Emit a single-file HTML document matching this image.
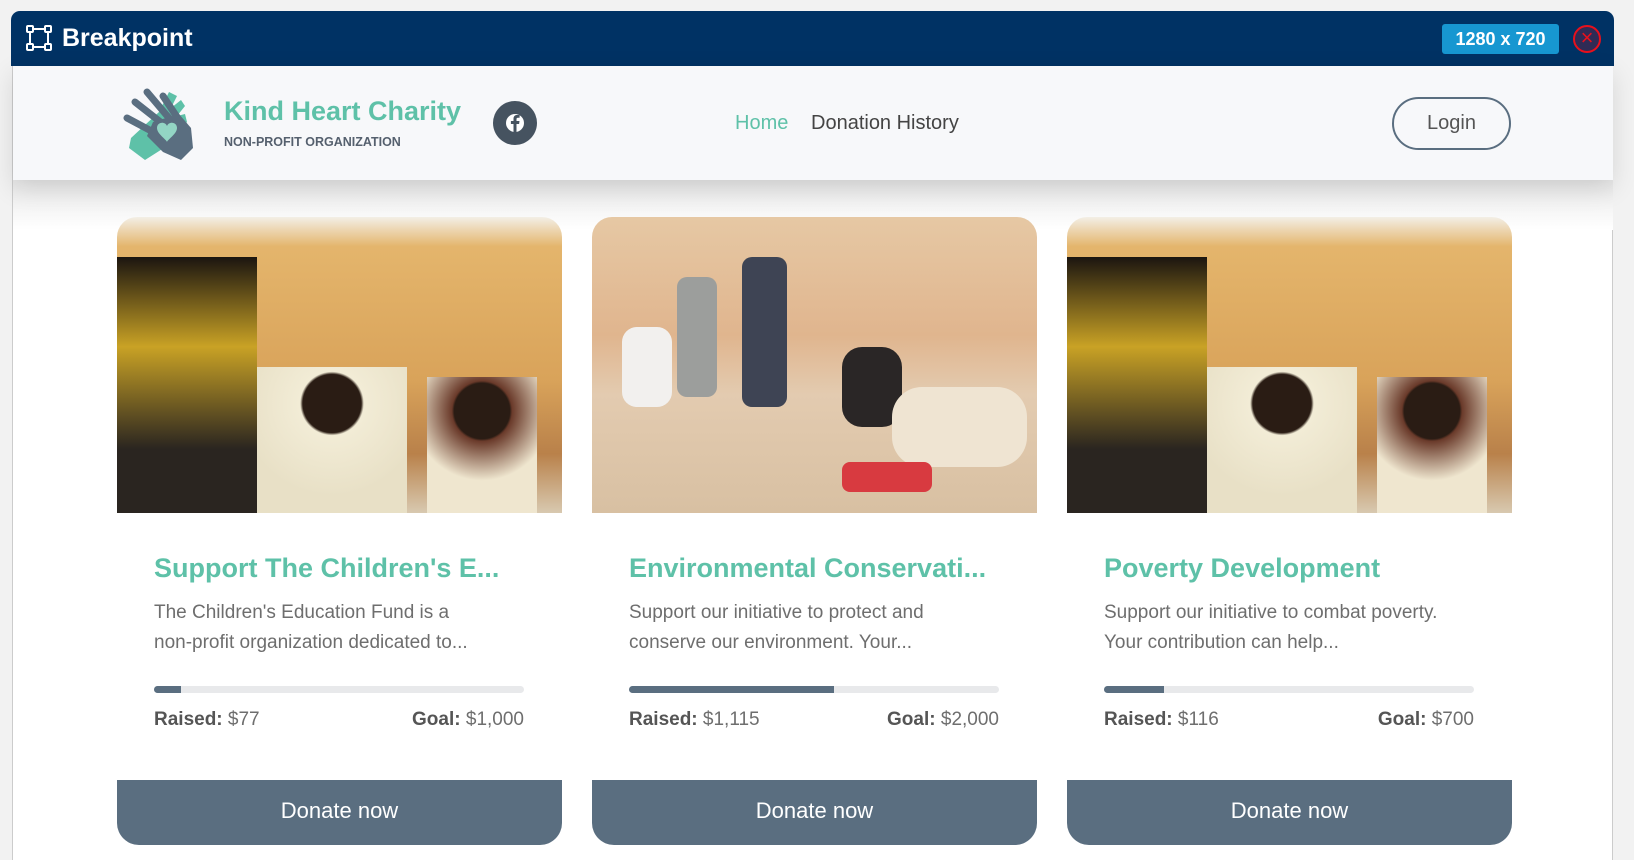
<!DOCTYPE html>
<html><head><meta charset="utf-8"><style>
*{box-sizing:border-box;margin:0;padding:0}
body{width:1634px;height:860px;background:#f2f2f2;font-family:"Liberation Sans",sans-serif;overflow:hidden;position:relative}
.bar{position:absolute;left:11px;top:11px;width:1603px;height:55px;background:#003264;border-radius:9px 9px 0 0}
.bar .t{position:absolute;left:51px;top:13px;color:#fff;font-weight:bold;font-size:25px}
.badge{position:absolute;left:1431px;top:13px;width:117px;height:30px;background:#1797d1;border-radius:3px;color:#fff;font-weight:bold;font-size:18px;text-align:center;line-height:30px}
.close{position:absolute;left:1562px;top:14px;width:28px;height:28px;border:2.5px solid #e8101c;border-radius:50%;background:#2f2b55;color:#e8101c;text-align:center;line-height:22px;font-size:22px}
.page{position:absolute;left:12px;top:66px;width:1601px;height:794px;background:#fff;border-left:1px solid #ccc;border-right:1px solid #ccc}
.hdr{position:absolute;left:0;top:0;width:1600px;height:114px;background:#f7f8fa;box-shadow:0 8px 24px rgba(0,0,0,.12)}
.fade{position:absolute;left:0;top:114px;width:1600px;height:50px;background:linear-gradient(#e8e8e8,#fff)}
.brand{position:absolute;left:211px;top:30px;color:#5ec1a8;font-size:27px;font-weight:bold}
.sub{position:absolute;left:211px;top:69px;color:#55606e;font-size:12.5px;font-weight:bold}
.fb{position:absolute;left:480px;top:35px;width:44px;height:44px;border-radius:50%;background:#465360}
.nav{position:absolute;top:46px;font-size:20px;color:#444}
.login{position:absolute;left:1379px;top:31px;width:119px;height:53px;border:2px solid #5a6e80;border-radius:27px;text-align:center;line-height:49px;font-size:20px;color:#555}
.card{position:absolute;top:151px;width:445px}
.img{height:296px;border-radius:20px 20px 0 0;overflow:hidden;position:relative}
.title{position:absolute;left:37px;top:336px;font-size:27px;font-weight:bold;color:#5ec1a8;white-space:nowrap}
.desc{position:absolute;left:37px;top:381px;font-size:19px;line-height:30px;color:#6e6e6e;width:345px}
.prog{position:absolute;left:37px;top:469px;width:370px;height:7px;background:#e8e9eb;border-radius:4px}
.prog i{display:block;height:7px;background:#5a6e80;border-radius:4px 0 0 4px}
.row{position:absolute;left:37px;top:492px;width:370px;font-size:19px;color:#6e6e6e}
.row b{color:#555}
.row span{float:right}
.btn{position:absolute;left:0;top:563px;width:445px;height:65px;background:#5a6e80;border-radius:0 0 22px 22px;color:#fff;text-align:center;line-height:62px;font-size:22px}
</style></head><body>
<div class="bar">
<svg style="position:absolute;left:14px;top:13px" width="28" height="28" viewBox="0 0 28 28" fill="none" stroke="#fff" stroke-width="2"><rect x="2" y="2" width="6" height="6" rx="1"/><rect x="20" y="2" width="6" height="6" rx="1"/><rect x="2" y="20" width="6" height="6" rx="1"/><rect x="20" y="20" width="6" height="6" rx="1"/><path d="M8 5h12M8 23h12M5 8v12M23 8v12"/></svg>
<div class="t">Breakpoint</div>
<div class="badge">1280 x 720</div>
<div class="close">×</div>
</div>
<div class="page">
<div class="fade"></div>
<div class="hdr">
<svg style="position:absolute;left:110px;top:20px" width="76" height="76" viewBox="0 0 76 76">
<g fill="#5ec1a8"><path d="M8 52 L36 26 L46 6 L54 10 L48 22 L58 14 L62 20 L54 30 L62 28 L64 36 L44 60 L22 74 L6 62 Z"/></g>
<g stroke="#5a6e80" stroke-width="7" stroke-linecap="round"><path d="M24 6 L46 32M12 16 L40 38M4 32 L34 48M40 10 L56 34"/></g>
<path fill="#5a6e80" d="M30 36 L56 28 L68 42 L70 62 L58 74 L40 66 L24 50 Z"/>
<path fill="#93d5c4" d="M34 42c0-6 8-7 10-2 2-5 10-4 10 2 0 6-10 12-10 14 0-2-10-8-10-14z"/>
</svg>
<div class="brand">Kind Heart Charity</div>
<div class="sub">NON-PROFIT ORGANIZATION</div>
<div class="fb"><svg width="44" height="44" viewBox="0 0 44 44"><circle cx="22" cy="22" r="9" fill="#fff"/><path d="M23.5 31v-8h2.6l.4-3h-3v-1.8c0-.9.3-1.5 1.5-1.5h1.6v-2.7c-.3 0-1.2-.1-2.3-.1-2.3 0-3.8 1.4-3.8 3.9V20h-2.6v3h2.6v8z" fill="#465360"/></svg></div>
<div class="nav" style="left:722px;color:#5ec1a8">Home</div>
<div class="nav" style="left:798px">Donation History</div>
<div class="login">Login</div>
</div>

<div class="card" style="left:104px">
<div class="img" style="background:linear-gradient(180deg,#f3efe6 0,#e4b56c 10%,#d9a35a 55%,#b9814a 80%,#d8c9b0 100%)">
<div style="position:absolute;left:0;top:40px;width:140px;height:256px;background:linear-gradient(#1b1510,#c9a225 35%,#2a2520 75%)"></div>
<div style="position:absolute;left:140px;top:150px;width:150px;height:146px;background:radial-gradient(circle at 50% 25%,#2a1c14 22%,#f2ecd6 24%,#e8e0c6 70%)"></div>
<div style="position:absolute;left:310px;top:160px;width:110px;height:136px;background:radial-gradient(circle at 50% 25%,#2a1c14 24%,#6a3a2a 26%,#efe6cf 60%)"></div>
</div>
<div class="title">Support The Children's E...</div>
<div class="desc">The Children's Education Fund is a non&#8209;profit organization dedicated to...</div>
<div class="prog"><i style="width:27px"></i></div>
<div class="row"><b>Raised:</b> $77<span><b>Goal:</b> $1,000</span></div>
<div class="btn">Donate now</div>
</div>

<div class="card" style="left:579px">
<div class="img" style="background:linear-gradient(180deg,#e6c8a4 0,#e0b58e 40%,#e3cbb0 60%,#d8c0a2 100%)">
<div style="position:absolute;left:85px;top:60px;width:40px;height:120px;background:#9c9e9c;border-radius:10px"></div>
<div style="position:absolute;left:150px;top:40px;width:45px;height:150px;background:#3e4454;border-radius:10px"></div>
<div style="position:absolute;left:250px;top:130px;width:60px;height:80px;background:#2a2626;border-radius:20px"></div>
<div style="position:absolute;left:300px;top:170px;width:135px;height:80px;background:#efe4d2;border-radius:30px"></div>
<div style="position:absolute;left:250px;top:245px;width:90px;height:30px;background:#d83a40;border-radius:8px"></div>
<div style="position:absolute;left:30px;top:110px;width:50px;height:80px;background:#f2f0ee;border-radius:15px"></div>
</div>
<div class="title">Environmental Conservati...</div>
<div class="desc">Support our initiative to protect and conserve our environment. Your...</div>
<div class="prog"><i style="width:205px"></i></div>
<div class="row"><b>Raised:</b> $1,115<span><b>Goal:</b> $2,000</span></div>
<div class="btn">Donate now</div>
</div>

<div class="card" style="left:1054px">
<div class="img" style="background:linear-gradient(180deg,#f3efe6 0,#e4b56c 10%,#d9a35a 55%,#b9814a 80%,#d8c9b0 100%)">
<div style="position:absolute;left:0;top:40px;width:140px;height:256px;background:linear-gradient(#1b1510,#c9a225 35%,#2a2520 75%)"></div>
<div style="position:absolute;left:140px;top:150px;width:150px;height:146px;background:radial-gradient(circle at 50% 25%,#2a1c14 22%,#f2ecd6 24%,#e8e0c6 70%)"></div>
<div style="position:absolute;left:310px;top:160px;width:110px;height:136px;background:radial-gradient(circle at 50% 25%,#2a1c14 24%,#6a3a2a 26%,#efe6cf 60%)"></div>
</div>
<div class="title">Poverty Development</div>
<div class="desc">Support our initiative to combat poverty. Your contribution can help...</div>
<div class="prog"><i style="width:60px"></i></div>
<div class="row"><b>Raised:</b> $116<span><b>Goal:</b> $700</span></div>
<div class="btn">Donate now</div>
</div>
</div>
</body></html>
